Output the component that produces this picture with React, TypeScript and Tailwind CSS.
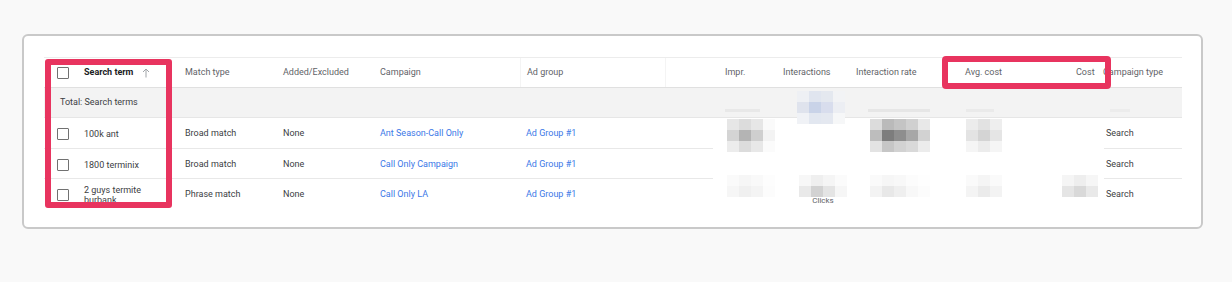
import React from 'react';

const cols =
  'grid grid-rows-1 grid-cols-[128px_99px_97px_152px_145px_48px_58px_73px_109px_111px_27px_91px]';

type Cells = string[][];

function Pixels({ cells, className = '' }: { cells: Cells; className?: string }) {
  return (
    <div className={`flex flex-col shrink-0 ${className}`}>
      {cells.map((row, i) => (
        <div key={i} className="flex">
          {row.map((c, j) => (
            <div key={j} className="w-[12px] h-[11px]" style={{ backgroundColor: c }} />
          ))}
        </div>
      ))}
    </div>
  );
}

function Checkbox() {
  return <div className="w-[12px] h-[12px] border-[1.5px] border-[#717171] rounded-[1px] shrink-0" />;
}

const rows = [
  {
    term: '100k ant',
    match: 'Broad match',
    campaign: 'Ant Season-Call Only',
  },
  {
    term: '1800 terminix',
    match: 'Broad match',
    campaign: 'Call Only Campaign',
  },
  {
    term: '2 guys termite burbank',
    match: 'Phrase match',
    campaign: 'Call Only LA',
  },
];

const row1Impr: Cells = [
  ['#e6e6e6', '#dcdcdc', '#e6e6e6', '#fafafa'],
  ['#d4d4d4', '#b4b4b4', '#cfcfcf', '#f3f3f3'],
  ['#ececec', '#dcdcdc', '#e8e8e8', '#fbfbfb'],
];
const row1Rate: Cells = [
  ['#dcdcdc', '#bababa', '#c4c4c4', '#d0d0d0', '#e8e8e8'],
  ['#bdbdbd', '#7d7d7d', '#8e8e8e', '#a7a7a7', '#d2d2d2'],
  ['#e3e3e3', '#c6c6c6', '#d2d2d2', '#d9d9d9', '#ececec'],
];
const row1Avg: Cells = [
  ['#ececec', '#e2e2e2', '#eeeeee'],
  ['#e3e3e3', '#d4d4d4', '#e5e5e5'],
  ['#f5f5f5', '#ececec', '#f5f5f5'],
];
const totalInter: Cells = [
  ['#eef0f4', '#e0e5ef', '#e4e8ef', '#f2f3f5'],
  ['#dfe3ed', '#c9d3e8', '#d8dded', '#eceef3'],
  ['#f0f2f6', '#e2e7f0', '#e4e8f0', '#f6f7f8'],
];
const row3Impr: Cells = [
  ['#fafafa', '#f6f6f6', '#f9f9f9', '#fdfdfd'],
  ['#f6f6f6', '#f0f0f0', '#f4f4f4', '#fcfcfc'],
];
const row3Inter: Cells = [
  ['#f7f7f7', '#efefef', '#f5f5f5', '#fbfbfb'],
  ['#e9e9e9', '#d2d2d2', '#e4e4e4', '#f6f6f6'],
];
const row3Rate: Cells = [
  ['#fafafa', '#f6f6f6', '#f8f8f8', '#fcfcfc', '#fefefe'],
  ['#f3f3f3', '#e8e8e8', '#efefef', '#f8f8f8', '#fcfcfc'],
];
const row3Avg: Cells = [
  ['#fafafa', '#f5f5f5', '#fafafa'],
  ['#f4f4f4', '#ebebeb', '#f3f3f3'],
];
const row3Cost: Cells = [
  ['#f5f5f5', '#eeeeee', '#f6f6f6'],
  ['#e5e5e5', '#d9d9d9', '#e9e9e9'],
];

export default function App() {
  return (
    <div className="relative w-[1232px] h-[282px] bg-[#f9f9f9] pt-[34px] pl-[22px] font-['Roboto','Liberation_Sans',sans-serif] text-[9px] text-[#3c4043]">
      {/* card */}
      <div className="w-[1181px] h-[195px] bg-white border-2 border-[#c9c9c9] rounded-[6px] pt-[21px] pl-[20px]">
        <div className="w-[1138px] h-[146px] overflow-hidden border-t border-[#ececec]">
          {/* header */}
          <div className={`${cols} h-[30px] border-b border-[#e0e0e0] text-[#5f6368]`}>
            <div className="flex items-center pl-[13px]">
              <Checkbox />
              <span className="ml-[15px] font-bold text-[#202124]">Search term</span>
              <svg className="ml-[9px]" width="8" height="10" viewBox="0 0 8 10" fill="none" stroke="#a0a4a8" strokeWidth="1">
                <path d="M4 9.5V1M1 4l3-3 3 3" />
              </svg>
            </div>
            <div className="flex items-center pl-[13px]">Match type</div>
            <div className="flex items-center pl-[12px]">Added/Excluded</div>
            <div className="flex items-center pl-[12px]">Campaign</div>
            <div className="flex items-center pl-[6px] border-l border-[#f4f4f4]">Ad group</div>
            <div className="border-l border-[#f4f4f4]" />
            <div className="flex items-center pl-[12px]">Impr.</div>
            <div className="flex items-center pl-[12px]">Interactions</div>
            <div className="flex items-center pl-[12px]">Interaction rate</div>
            <div className="flex items-center pl-[12px]">Avg. cost</div>
            <div className="flex items-center pl-[12px] whitespace-nowrap">Cost</div>
            <div className="flex items-center pl-[12px] whitespace-nowrap">Campaign type</div>
          </div>

          {/* total row */}
          <div className={`${cols} h-[30px] bg-[#f3f3f3] border-b border-[#e6e6e6]`}>
            <div className="flex items-center pl-[16px] pt-[1px] col-span-6 whitespace-nowrap">Total: Search terms</div>
            <div className="flex items-start pl-[12px] pt-[21px]">
              <div className="w-[35px] h-[3px] bg-[#e8e8e8]" />
            </div>
            <div className="flex items-start pl-[26px] pt-[3px]">
              <Pixels cells={totalInter} />
            </div>
            <div className="flex items-start pl-[24px] pt-[21px]">
              <div className="w-[62px] h-[3px] bg-[#e6e6e6]" />
            </div>
            <div className="flex items-start pl-[13px] pt-[21px]">
              <div className="w-[28px] h-[3px] bg-[#eaeaea]" />
            </div>
            <div />
            <div className="flex items-start pl-[19px] pt-[21px]">
              <div className="w-[20px] h-[3px] bg-[#ececec]" />
            </div>
          </div>

          {rows.map((r, i) => {
            const line = i < 2 ? 'border-b border-[#e8e8e8]' : '';
            return (
              <div key={r.term} className={`${cols} ${i === 0 ? 'h-[31px]' : 'h-[30px]'}`}>
                <div className={`flex items-center pl-[13px] pt-[2px] ${line}`}>
                  <Checkbox />
                  <span className="ml-[15px] w-[70px] leading-[10px]">{r.term}</span>
                </div>
                <div className={`flex items-center pl-[13px] pt-[2px] ${line}`}>{r.match}</div>
                <div className={`flex items-center pl-[12px] pt-[2px] ${line}`}>None</div>
                <div className={`flex items-center pl-[12px] pt-[2px] text-[#3b78e7] ${line}`}>{r.campaign}</div>
                <div className={`flex items-center pl-[6px] pt-[2px] text-[#3b78e7] ${line}`}>Ad Group #1</div>
                <div className={line} />
                {/* redacted metrics */}
                <div className="flex items-start pl-[14px]">
                  {i === 0 && <Pixels cells={row1Impr} className="mt-[1px]" />}
                  {i === 2 && <Pixels cells={row3Impr} className="mt-[-4px]" />}
                </div>
                <div className="flex items-start pl-[28px]">
                  {i === 2 && (
                    <div className="flex flex-col items-center mt-[-4px]">
                      <Pixels cells={row3Inter} />
                      <span className="mt-[-1px] text-[8px] leading-[10px] text-[#5f6368]">Clicks</span>
                    </div>
                  )}
                </div>
                <div className="flex items-start pl-[26px]">
                  {i === 0 && <Pixels cells={row1Rate} className="mt-[1px]" />}
                  {i === 2 && <Pixels cells={row3Rate} className="mt-[-4px]" />}
                </div>
                <div className="flex items-start pl-[13px]">
                  {i === 0 && <Pixels cells={row1Avg} className="mt-[1px]" />}
                  {i === 2 && <Pixels cells={row3Avg} className="mt-[-4px]" />}
                </div>
                <div className="flex items-start ml-[-2px]">
                  {i === 2 && <Pixels cells={row3Cost} className="mt-[-4px]" />}
                </div>
                <div className={`flex items-center ml-[13px] pl-[2px] pt-[2px] ${line}`}>Search</div>
              </div>
            );
          })}
        </div>
      </div>

      {/* highlight annotations */}
      <div className="absolute left-[45px] top-[59px] w-[127px] h-[149px] border-[6px] border-[#e8345f] rounded-[3px]" />
      <div className="absolute left-[942px] top-[56px] w-[169px] h-[33px] border-[6px] border-[#e8345f] rounded-[4px]" />
    </div>
  );
}
